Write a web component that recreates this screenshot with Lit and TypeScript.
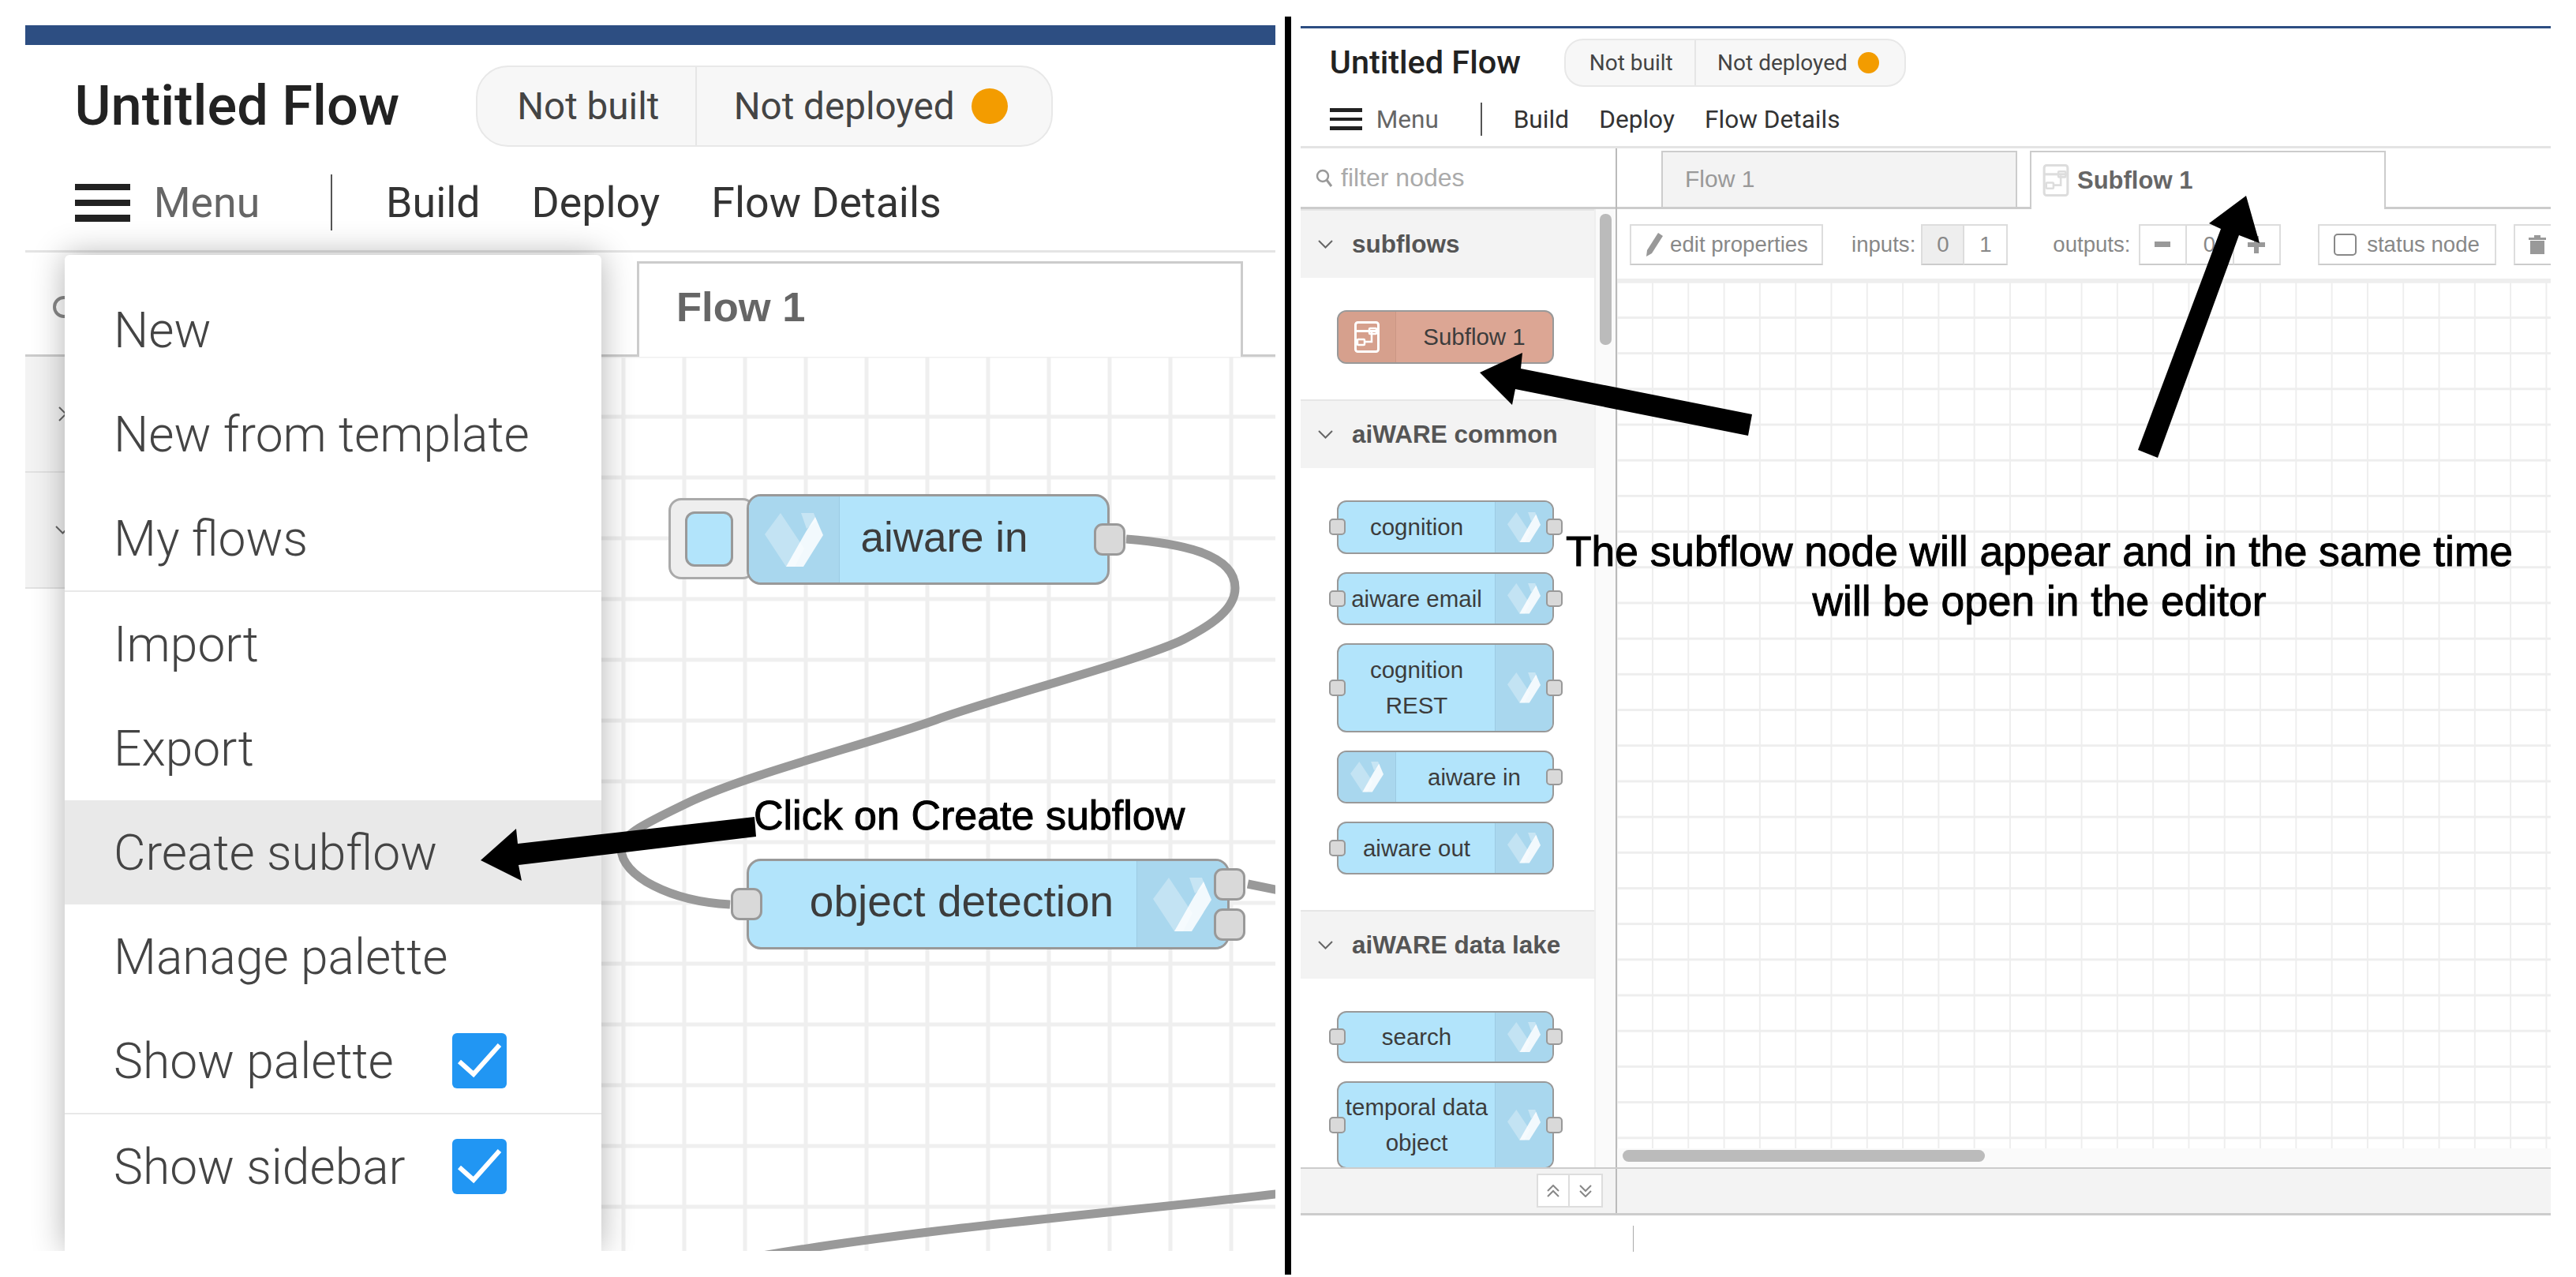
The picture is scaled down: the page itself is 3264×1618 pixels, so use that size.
import { LitElement, html, css, svg, nothing } from "lit";
import { customElement, property } from "lit/decorators.js";

const subflowIcon = svg`
  <rect x="1.5" y="1.5" width="29" height="37" rx="3" fill="none" stroke="currentColor" stroke-width="3" />
  <rect x="1.5" y="11" width="29" height="3" fill="currentColor" />
  <rect x="19" y="9" width="9" height="7" rx="1" fill="none" stroke="currentColor" stroke-width="2.5" />
  <rect x="4" y="23" width="9" height="7" rx="1" fill="none" stroke="currentColor" stroke-width="2.5" />
  <path d="M13 26H22V14" fill="none" stroke="currentColor" stroke-width="2.5" />
`;

@customElement("flow-header")
class FlowHeader extends LitElement {
  static styles = css`
    :host {
      display: block;
      font-family: Roboto, sans-serif;
      padding: var(--head-top) 0 var(--head-bottom) 0.92em;
      border-bottom: 3px solid #e4e4e4;
    }
    .title-row {
      display: flex;
      align-items: center;
      gap: var(--pill-gap);
    }
    .title {
      font-size: 1.035em;
      font-weight: 500;
      color: #222;
      line-height: 1;
    }
    .pill {
      height: 1.515em;
      box-sizing: border-box;
      display: flex;
      align-items: center;
      background: #f7f7f7;
      border: 2px solid #e8e8e8;
      border-radius: 0.6em;
    }
    .cell {
      font-size: 0.7em;
      color: #444;
      padding: 0 0.97em 0 1.06em;
      height: 100%;
      display: flex;
      align-items: center;
    }
    .cell + .cell {
      border-left: 2px solid #e6e6e6;
      padding: 0 1.15em 0 0.97em;
    }
    .dot {
      width: 0.96em;
      height: 0.96em;
      border-radius: 50%;
      background: #f39c00;
      margin-left: 0.46em;
    }
    .tools {
      display: flex;
      align-items: center;
      height: 1.044em;
      margin-top: 0.515em;
    }
    .burger {
      width: 1.03em;
      height: 0.706em;
      display: flex;
      flex-direction: column;
      justify-content: space-between;
    }
    .burger span {
      height: 0.118em;
      background: #222;
    }
    .menu-label,
    .link {
      font-size: 0.79em;
      color: #333;
    }
    .menu-label {
      color: #666;
      margin-left: 0.56em;
    }
    .sep {
      width: 2px;
      height: 100%;
      background: #555;
      margin: 0 1em 0 1.32em;
    }
    .link {
      margin-right: 1.21em;
    }
  `;

  render() {
    return html`
      <div class="title-row">
        <div class="title">Untitled Flow</div>
        <div class="pill">
          <div class="cell">Not built</div>
          <div class="cell">Not deployed<span class="dot"></span></div>
        </div>
      </div>
      <div class="tools">
        <div class="burger"><span></span><span></span><span></span></div>
        <span class="menu-label">Menu</span>
        <span class="sep"></span>
        <span class="link">Build</span>
        <span class="link">Deploy</span>
        <span class="link">Flow Details</span>
      </div>
    `;
  }
}

@customElement("flow-node")
class FlowNode extends LitElement {
  static styles = css`
    :host {
      display: block;
      position: relative;
      font-family: "Liberation Sans", Arial, sans-serif;
    }
    .node {
      display: flex;
      height: 100%;
      box-sizing: border-box;
      overflow: hidden;
      background: #b2e4fb;
      border: var(--node-border, 2px) solid #999;
      border-radius: var(--node-radius, 12px);
    }
    .node.left {
      flex-direction: row-reverse;
    }
    .label {
      flex: 1;
      display: flex;
      align-items: center;
      justify-content: center;
      text-align: center;
      white-space: pre-line;
      color: #3c3c3c;
      font-size: var(--node-font, 29.5px);
      line-height: 45px;
      box-sizing: border-box;
    }
    .icon {
      width: var(--icon-w, 72px);
      flex: none;
      display: flex;
      align-items: center;
      justify-content: center;
      background: #a9d7ee;
      border-left: 1px solid #9ccbe3;
    }
    .node.left .icon {
      border-left: 0;
      border-right: 1px solid #9ccbe3;
    }
    .logo {
      width: var(--logo-w, 42px);
      height: auto;
    }
    .node.subflow {
      background: #dca694;
    }
    .node.subflow .icon {
      background: #d6a08d;
      border: 0;
      border-right: 1px solid #cb9684;
      color: #fff;
    }
    .ports {
      position: absolute;
      top: 0;
      bottom: 0;
      display: flex;
      flex-direction: column;
      justify-content: center;
      gap: var(--port-gap, 8px);
    }
    .ports.in {
      left: calc(var(--port-w, 21px) / -2);
    }
    .ports.out {
      right: calc(var(--port-w, 21px) / -2);
    }
    .port {
      width: var(--port-w, 21px);
      height: var(--port-h, 21px);
      box-sizing: border-box;
      background: #d9d9d9;
      border: var(--node-border, 2px) solid #999;
      border-radius: var(--port-radius, 5px);
    }
  `;

  @property() label = "";
  @property() side = "right";
  @property() kind = "";
  @property({ type: Number }) inputs = 0;
  @property({ type: Number }) outputs = 0;
  @property() pad = "0";

  private ports(dir: string, count: number) {
    if (!count) return nothing;
    return html`<div class="ports ${dir}">
      ${Array.from({ length: count }, () => html`<div class="port"></div>`)}
    </div>`;
  }

  render() {
    const sub = this.kind === "subflow";
    return html`
      <div class="node ${this.side} ${this.kind}">
        <div class="label" style="padding:${this.pad}">${this.label}</div>
        <div class="icon">
          ${sub
            ? html`<svg width="32" height="40" viewBox="0 0 32 40">${subflowIcon}</svg>`
            : html`<svg class="logo" viewBox="0 0 74 68">
                <polygon points="20,0 50,45 38,68 27,68 0,27" fill="#fff" fill-opacity="0.3" />
                <polygon points="46,0 62,0 66,10 53,20" fill="#fff" fill-opacity="0.35" />
                <polygon points="64,5 74,28 49,68 27,68 52,24" fill="#fff" fill-opacity="0.85" />
              </svg>`}
        </div>
      </div>
      ${this.ports("in", this.inputs)} ${this.ports("out", this.outputs)}
    `;
  }
}

const MENU = [
  { label: "New" },
  { label: "New from template" },
  { label: "My flows", split: true },
  { label: "Import" },
  { label: "Export" },
  { label: "Create subflow", active: true },
  { label: "Manage palette" },
  { label: "Show palette", check: true, split: true },
  { label: "Show sidebar", check: true },
];

// canvas nodes on the big screenshot, in page coordinates
const CANVAS_NODES = [
  { label: "aiware in", x: 946, y: 626, w: 460, h: 115, side: "left", outputs: 1, inputs: 0, pad: "0 74px 6px 0", cls: "big" },
  { label: "object detection", x: 946, y: 1088, w: 612, h: 115, side: "right", outputs: 2, inputs: 1, pad: "0 0 6px 48px", cls: "big wide" },
];

const PALETTE = [
  { title: "subflows", nodes: [{ label: "Subflow 1", kind: "subflow", side: "left", h: 68 }] },
  {
    title: "aiWARE common",
    nodes: [
      { label: "cognition", inputs: 1, outputs: 1, h: 68 },
      { label: "aiware email", inputs: 1, outputs: 1, h: 67 },
      { label: "cognition\nREST", inputs: 1, outputs: 1, h: 113 },
      { label: "aiware in", side: "left", outputs: 1, h: 67 },
      { label: "aiware out", inputs: 1, h: 67 },
    ],
  },
  {
    title: "aiWARE data lake",
    nodes: [
      { label: "search", inputs: 1, outputs: 1, h: 66 },
      { label: "temporal data\nobject", inputs: 1, outputs: 1, h: 111 },
    ],
  },
];

const chevron = html`<svg class="chev" width="19" height="11" viewBox="0 0 19 11">
  <polyline points="1,1 9.5,9.5 18,1" fill="none" stroke="#666" stroke-width="2" />
</svg>`;

const check = html`<span class="check"
  ><svg width="69" height="70" viewBox="0 0 69 70">
    <polyline points="9,36 27,52 60,15" fill="none" stroke="#fff" stroke-width="6" />
  </svg></span
>`;

@customElement("app-root")
class AppRoot extends LitElement {
  static styles = css`
    :host {
      display: block;
      width: 3264px;
      height: 1618px;
      position: relative;
      overflow: hidden;
      background: #fff;
      font-family: "Liberation Sans", Arial, sans-serif;
    }
    .shot {
      display: flex;
      align-items: flex-start;
    }
    .panel {
      position: relative;
      width: 1584px;
      height: 1553px;
      overflow: hidden;
      display: flex;
      flex-direction: column;
      flex: none;
    }
    .panel.left {
      margin: 32px 0 0 32px;
      --head-top: 26px;
      --head-bottom: 25px;
      --pill-gap: 1.42em;
    }
    .panel.right {
      margin: 33px 0 0 12px;
      --head-top: 13px;
      --head-bottom: 13px;
      --pill-gap: 1.38em;
    }
    .black-bar {
      width: 8px;
      height: 1594px;
      margin: 21px 0 0 12px;
      background: #000;
      flex: none;
    }
    .topbar {
      height: 25px;
      background: #2d4e82;
      flex: none;
    }
    .panel.right .topbar {
      height: 3px;
    }
    .left flow-header {
      font-size: 68px;
    }
    .right flow-header {
      font-size: 40px;
    }

    /* left screenshot */
    .tab-row {
      display: flex;
      align-items: flex-end;
      height: 132px;
      flex: none;
      box-sizing: border-box;
      border-bottom: 3px solid #ccc;
    }
    .search-glyph {
      margin: 0 0 40px 33px;
    }
    .big-tab {
      margin: 0 41px -3px auto;
      width: 768px;
      height: 121px;
      box-sizing: border-box;
      background: #fff;
      border: 3px solid #ccc;
      border-bottom: 0;
      padding: 0 0 9px 47px;
      display: flex;
      align-items: center;
      font-weight: 700;
      font-size: 52.5px;
      color: #666;
    }
    .left-body {
      flex: 1;
      display: flex;
      min-height: 0;
    }
    .left-palette {
      width: 730px;
      flex: none;
    }
    .left-head {
      height: 147px;
      box-sizing: border-box;
      background: #f3f3f3;
      border-bottom: 2px solid #e2e2e2;
      display: flex;
      align-items: center;
      padding-left: 38px;
    }
    .left-head.shut .chev {
      transform: rotate(-90deg);
    }
    .canvas {
      flex: 1;
      position: relative;
      overflow: hidden;
      background-image: linear-gradient(to right, #efefef 5px, transparent 5px),
        linear-gradient(to bottom, #efefef 5px, transparent 5px);
      background-size: 77px 77px;
      background-position: 25.5px 73.5px;
    }
    .wires {
      position: absolute;
      inset: 0;
      width: 100%;
      height: 100%;
    }
    .inject {
      position: absolute;
      left: 85px;
      top: 179px;
      width: 110px;
      height: 103px;
      box-sizing: border-box;
      background: #eee;
      border: 3px solid #aaa;
      border-radius: 16px;
    }
    .inject span {
      display: block;
      width: 61px;
      height: 70px;
      margin: 14px 0 0 18px;
      box-sizing: border-box;
      background: #b2e4fb;
      border: 3px solid #999;
      border-radius: 12px;
    }
    flow-node.big {
      position: absolute;
      --node-font: 53px;
      --node-border: 3px;
      --node-radius: 18px;
      --icon-w: 114px;
      --logo-w: 74px;
      --port-w: 40px;
      --port-h: 41px;
      --port-radius: 11px;
      --port-gap: 10px;
    }
    flow-node.wide {
      --node-font: 55px;
    }
    .menu {
      position: absolute;
      left: 50px;
      top: 291px;
      bottom: 0;
      width: 680px;
      padding-top: 29px;
      box-sizing: border-box;
      background: #fff;
      box-shadow: 0 0 42px rgba(0, 0, 0, 0.3);
      border-radius: 6px 6px 0 0;
      font-family: Roboto, sans-serif;
      font-weight: 300;
      font-size: 62.3px;
      color: #444;
    }
    .item {
      height: 132px;
      display: grid;
      grid-template-columns: 429px auto;
      align-items: center;
      padding-left: 62px;
      white-space: nowrap;
    }
    .item.active {
      background: #e9e9e9;
    }
    .item.split {
      border-bottom: 2px solid #e8e8e8;
    }
    .check {
      display: block;
      width: 69px;
      height: 70px;
      border-radius: 6px;
      background: #2196f3;
    }

    /* right screenshot */
    .work {
      display: flex;
      height: 1291px;
      flex: none;
    }
    .side {
      width: 399px;
      flex: none;
      display: flex;
      flex-direction: column;
      border-right: 2px solid #bbb;
      min-height: 0;
    }
    .filter {
      height: 72px;
      padding-top: 2px;
      flex: none;
      box-sizing: content-box;
      border-bottom: 3px solid #ccc;
      display: flex;
      align-items: center;
      gap: 10px;
      padding-left: 19px;
      font-size: 32px;
      color: #aaa;
    }
    .side-main {
      flex: 1;
      display: flex;
      min-height: 0;
    }
    .list {
      width: 372px;
      flex: none;
      overflow: hidden;
    }
    .gutter {
      flex: 1;
      background: #fafafa;
      border-left: 2px solid #eee;
      padding: 6px 5px 0 5px;
    }
    .thumb {
      height: 166px;
      border-radius: 7px;
      background: #bbb;
    }
    .sec-head {
      height: 87px;
      box-sizing: border-box;
      background: #f3f3f3;
      border-top: 2px solid #e6e6e6;
      display: flex;
      align-items: center;
      gap: 24px;
      padding-left: 22px;
      font-weight: 700;
      font-size: 31.5px;
      color: #555;
    }
    .sec-body {
      padding: 41px 0 45px 46px;
      display: flex;
      flex-direction: column;
      gap: 23px;
    }
    .sec-body flow-node {
      width: 275px;
    }
    .editor {
      flex: 1;
      min-width: 0;
      display: flex;
      flex-direction: column;
    }
    .tabs {
      height: 77px;
      flex: none;
      box-sizing: border-box;
      border-bottom: 3px solid #ccc;
      display: flex;
      align-items: flex-end;
      gap: 16px;
      padding-left: 56px;
    }
    .tab {
      width: 451px;
      height: 71px;
      box-sizing: border-box;
      display: flex;
      align-items: center;
      gap: 10px;
      border: 2px solid #ccc;
      border-bottom: 0;
      font-size: 30px;
      color: #999;
      background: #f3f3f3;
      padding-left: 28px;
    }
    .tab.on {
      background: #fff;
      margin-bottom: -3px;
      height: 74px;
      padding-left: 14px;
      font-weight: 700;
      font-size: 31px;
      color: #666;
    }
    .tab.on svg {
      color: #ddd;
    }
    .toolbar {
      height: 92px;
      flex: none;
      box-sizing: border-box;
      border-bottom: 4px solid #eee;
      display: flex;
      align-items: center;
      padding: 2px 0 0 16px;
      font-size: 27.6px;
      color: #888;
    }
    .btn {
      height: 52px;
      box-sizing: border-box;
      border: 2px solid #ddd;
      border-bottom-color: #ccc;
      display: flex;
      align-items: center;
      justify-content: center;
      flex: none;
    }
    .edit {
      width: 245px;
      gap: 8px;
    }
    .caption {
      margin: 0 7px 0 36px;
    }
    .caption.out {
      margin: 0 10px 0 57px;
    }
    .grp {
      display: flex;
    }
    .grp .btn + .btn {
      border-left: 0;
    }
    .on-cell {
      background: #eee;
    }
    .status {
      width: 226px;
      margin-left: 47px;
      gap: 13px;
    }
    .box {
      width: 29px;
      height: 28px;
      box-sizing: border-box;
      border: 2px solid #888;
      border-radius: 5px;
    }
    .trash {
      width: 60px;
      margin-left: 22px;
    }
    .grid {
      flex: 1;
      min-height: 0;
      background-image: linear-gradient(to right, #eee 2px, transparent 2px),
        linear-gradient(to bottom, #eee 3px, transparent 3px);
      background-size: 45.3px 45.2px;
      background-position: 44px 44px;
    }
    .hscroll {
      height: 24px;
      flex: none;
      padding: 2px 0 0 7px;
      box-sizing: border-box;
      background: #fafafa;
    }
    .hscroll div {
      width: 459px;
      height: 15px;
      border-radius: 8px;
      background: #bbb;
    }
    .foot {
      height: 61px;
      flex: none;
      box-sizing: border-box;
      display: flex;
      background: #f3f3f3;
      border-top: 2px solid #ccc;
      border-bottom: 3px solid #ccc;
    }
    .foot-left {
      width: 401px;
      border-right: 2px solid #bbb;
      display: flex;
      justify-content: flex-end;
      align-items: center;
      padding-right: 16px;
      box-sizing: border-box;
    }
    .nudge {
      width: 42px;
      height: 43px;
      box-sizing: border-box;
      background: #fff;
      border: 2px solid #ddd;
      display: flex;
      align-items: center;
      justify-content: center;
    }
    .nudge + .nudge {
      border-left: 0;
    }
    .status-bar {
      flex: 1;
      padding: 13px 0 0 421px;
    }
    .status-bar span {
      display: block;
      width: 1px;
      height: 33px;
      background: #aaa;
    }

    /* annotations drawn on top of both screenshots */
    .arrows {
      position: absolute;
      inset: 0;
      pointer-events: none;
    }
    .note {
      position: absolute;
      color: #000;
      font-size: 52px;
      line-height: 60px;
      white-space: nowrap;
      -webkit-text-stroke: 1px #000;
    }
    .note.one {
      left: 955px;
      top: 1003px;
    }
    .note.two {
      left: 1934px;
      width: 1300px;
      top: 668px;
      font-size: 53.3px;
      line-height: 62.5px;
      text-align: center;
    }
  `;

  private renderLeft() {
    const ox = 762;
    const oy = 452;
    return html`
      <section class="panel left">
        <div class="topbar"></div>
        <flow-header></flow-header>
        <div class="tab-row">
          <svg class="search-glyph" width="36" height="36" viewBox="0 0 36 36">
            <circle cx="16" cy="16" r="12" fill="none" stroke="#888" stroke-width="4" />
            <line x1="25" y1="25" x2="34" y2="34" stroke="#888" stroke-width="4" />
          </svg>
          <div class="big-tab">Flow 1</div>
        </div>
        <div class="left-body">
          <div class="left-palette">
            <div class="left-head shut">${chevron}</div>
            <div class="left-head">${chevron}</div>
          </div>
          <div class="canvas">
            <svg class="wires" viewBox="${ox} ${oy} 854 1133" preserveAspectRatio="none">
              <path
                d="M1427 683C1490 688 1565 700 1565 745C1565 772 1535 792 1500 810C1450 835 1260 885 1186 912C1100 943 950 980 872 1017C820 1042 787 1058 787 1075C787 1110 850 1142 925 1146"
                fill="none"
                stroke="#999"
                stroke-width="11"
              />
              <path d="M1581 1120L1620 1128" fill="none" stroke="#999" stroke-width="11" />
              <path d="M1625 1512C1400 1538 1173 1556 960 1592" fill="none" stroke="#999" stroke-width="11" />
            </svg>
            <div class="inject"><span></span></div>
            ${CANVAS_NODES.map(
              (n) => html`<flow-node
                class=${n.cls}
                style="left:${n.x - ox}px;top:${n.y - oy}px;width:${n.w}px;height:${n.h}px"
                label=${n.label}
                side=${n.side}
                pad=${n.pad}
                .inputs=${n.inputs}
                .outputs=${n.outputs}
              ></flow-node>`
            )}
          </div>
        </div>
        <div class="menu">
          ${MENU.map(
            (m) => html`<div class="item ${m.active ? "active" : ""} ${m.split ? "split" : ""}">
              <span>${m.label}</span>${m.check ? check : nothing}
            </div>`
          )}
        </div>
      </section>
    `;
  }

  private renderRight() {
    return html`
      <section class="panel right">
        <div class="topbar"></div>
        <flow-header></flow-header>
        <div class="work">
          <div class="side">
            <div class="filter">
              <svg width="22" height="24" viewBox="0 0 22 24">
                <circle cx="9" cy="9" r="7" fill="none" stroke="#999" stroke-width="2.5" />
                <line x1="14" y1="14" x2="20" y2="22" stroke="#999" stroke-width="3" />
              </svg>
              filter nodes
            </div>
            <div class="side-main">
              <div class="list">
                ${PALETTE.map(
                  (sec) => html`
                    <div class="sec-head">${chevron}<span>${sec.title}</span></div>
                    <div class="sec-body">
                      ${sec.nodes.map(
                        (n: any) => html`<flow-node
                          style="height:${n.h}px"
                          label=${n.label}
                          kind=${n.kind ?? ""}
                          side=${n.side ?? "right"}
                          .inputs=${n.inputs ?? 0}
                          .outputs=${n.outputs ?? 0}
                        ></flow-node>`
                      )}
                    </div>
                  `
                )}
              </div>
              <div class="gutter"><div class="thumb"></div></div>
            </div>
          </div>
          <div class="editor">
            <div class="tabs">
              <div class="tab">Flow 1</div>
              <div class="tab on">
                <svg width="34" height="41" viewBox="0 0 32 40">${subflowIcon}</svg>
                Subflow 1
              </div>
            </div>
            <div class="toolbar">
              <div class="btn edit">
                <svg width="24" height="32" viewBox="0 0 24 32">
                  <path d="M17 1L23 5L9 27L2 31L3 23Z" fill="#999" />
                </svg>
                edit properties
              </div>
              <span class="caption">inputs:</span>
              <div class="grp">
                <div class="btn on-cell" style="width:55px">0</div>
                <div class="btn" style="width:55px">1</div>
              </div>
              <span class="caption out">outputs:</span>
              <div class="grp">
                <div class="btn" style="width:61px">
                  <svg width="20" height="8"><rect width="20" height="7" fill="#999" /></svg>
                </div>
                <div class="btn" style="width:60px">0</div>
                <div class="btn" style="width:59px">
                  <svg width="22" height="22" viewBox="0 0 22 22">
                    <path d="M8 0h6v8h8v6h-8v8H8v-8H0V8h8Z" fill="#999" />
                  </svg>
                </div>
              </div>
              <div class="btn status"><span class="box"></span>status node</div>
              <div class="btn trash">
                <svg width="22" height="24" viewBox="0 0 22 24">
                  <path d="M0 3h7V0h8v3h7v3H0ZM2 7h18v17H2Z" fill="#999" />
                </svg>
              </div>
            </div>
            <div class="grid"></div>
            <div class="hscroll"><div></div></div>
          </div>
        </div>
        <div class="foot">
          <div class="foot-left">
            <div class="nudge">
              <svg width="18" height="16" viewBox="0 0 18 16">
                <path d="M2 8L9 1L16 8M2 15L9 8L16 15" fill="none" stroke="#888" stroke-width="2" />
              </svg>
            </div>
            <div class="nudge">
              <svg width="18" height="16" viewBox="0 0 18 16">
                <path d="M2 1L9 8L16 1M2 8L9 15L16 8" fill="none" stroke="#888" stroke-width="2" />
              </svg>
            </div>
          </div>
        </div>
        <div class="status-bar"><span></span></div>
      </section>
    `;
  }

  render() {
    return html`
      <div class="shot">
        ${this.renderLeft()}
        <div class="black-bar"></div>
        ${this.renderRight()}
      </div>
      <svg class="arrows" width="3264" height="1618" viewBox="0 0 3264 1618">
        <polygon points="609,1090 654,1050 656,1069 956,1035 958,1060 657,1096 661,1116" fill="#000" />
        <polygon points="1875,472 1929,447 1927,467 2220,525 2215,552 1920,493 1916,513" fill="#000" />
        <polygon points="2846,248 2863,308 2837,298 2734,580 2709,570 2814,290 2799,283" fill="#000" />
      </svg>
      <div class="note one">Click on Create subflow</div>
      <div class="note two">The subflow node will appear and in the same time<br />will be open in the editor</div>
    `;
  }
}
